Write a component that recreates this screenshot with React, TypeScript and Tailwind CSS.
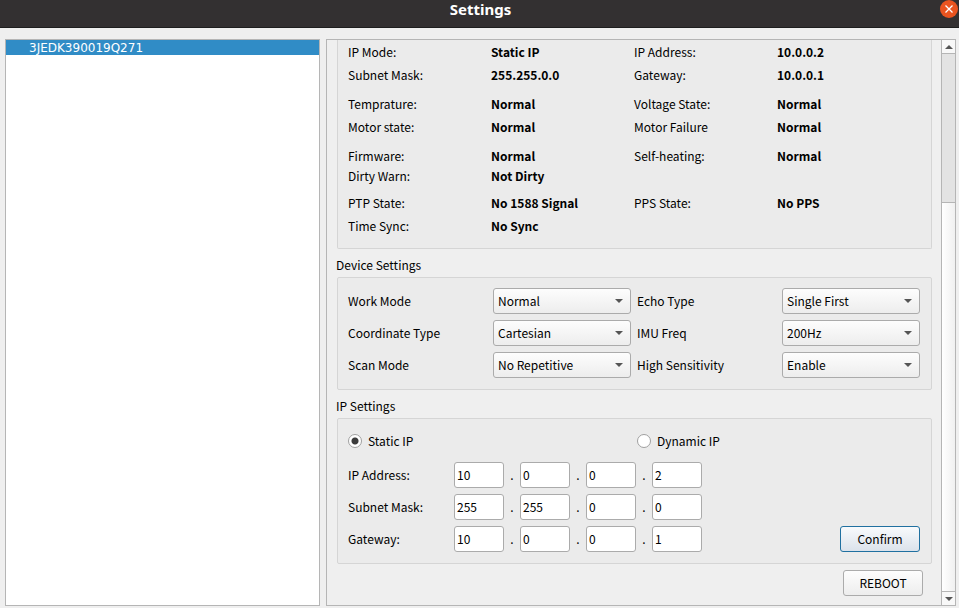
import type { ReactNode } from 'react';

const statusGroups = [
  {
    id: 'network',
    items: [
      ['IP Mode:', 'Static IP'],
      ['IP Address:', '10.0.0.2'],
      ['Subnet Mask:', '255.255.0.0'],
      ['Gateway:', '10.0.0.1'],
    ],
  },
  {
    id: 'health',
    items: [
      ['Temprature:', 'Normal'],
      ['Voltage State:', 'Normal'],
      ['Motor state:', 'Normal'],
      ['Motor Failure', 'Normal'],
    ],
  },
  {
    id: 'firmware',
    items: [
      ['Firmware:', 'Normal'],
      ['Self-heating:', 'Normal'],
      ['Dirty Warn:', 'Not Dirty'],
    ],
  },
  {
    id: 'sync',
    items: [
      ['PTP State:', 'No 1588 Signal'],
      ['PPS State:', 'No PPS'],
      ['Time Sync:', 'No Sync'],
    ],
  },
];

const deviceSettings = [
  { id: 'work-mode', label: 'Work Mode', options: ['Normal', 'Standby'] },
  { id: 'echo-type', label: 'Echo Type', options: ['Single First', 'Single Strongest', 'Dual'] },
  { id: 'coordinate', label: 'Coordinate Type', options: ['Cartesian', 'Spherical'] },
  { id: 'imu-freq', label: 'IMU Freq', options: ['200Hz', '0Hz'] },
  { id: 'scan-mode', label: 'Scan Mode', options: ['No Repetitive', 'Repetitive'] },
  { id: 'sensitivity', label: 'High Sensitivity', options: ['Enable', 'Disable'] },
];

const addressRows = [
  { id: 'ip', label: 'IP Address:', octets: ['10', '0', '0', '2'] },
  { id: 'mask', label: 'Subnet Mask:', octets: ['255', '255', '0', '0'] },
  { id: 'gateway', label: 'Gateway:', octets: ['10', '0', '0', '1'] },
];

function Arrow({ up = false }: { up?: boolean }) {
  return (
    <svg width="8" height="4" viewBox="0 0 8 4" fill="#555555" aria-hidden="true">
      <path d={up ? 'M0 4h8L4 0z' : 'M0 0h8L4 4z'} />
    </svg>
  );
}

function Heading({ children }: { children: ReactNode }) {
  return <h2 className="mt-1.5 mb-0.5 ml-[9px] leading-5">{children}</h2>;
}

function SelectField({ id, label, options }: { id: string; label: string; options: string[] }) {
  return (
    <>
      <label htmlFor={id}>{label}</label>
      <div className="relative">
        <select
          id={id}
          className="block h-[26px] w-full appearance-none rounded-[3px] border border-[#ababab] bg-linear-to-b from-[#fdfdfd] to-[#ededed] pl-1 pr-5"
        >
          {options.map((o) => (
            <option key={o}>{o}</option>
          ))}
        </select>
        <span className="pointer-events-none absolute inset-y-0 right-2 flex items-center">
          <Arrow />
        </span>
      </div>
    </>
  );
}

function Radio({ label, checked = false }: { label: string; checked?: boolean }) {
  return (
    <label className="flex items-center gap-1.5 leading-5">
      <input
        type="radio"
        name="ip-mode"
        defaultChecked={checked}
        className="size-3.5 appearance-none rounded-full border border-[#a0a0a0] bg-white checked:bg-[radial-gradient(circle,#3c3c3c_3px,#ffffff_4px)]"
      />
      {label}
    </label>
  );
}

export default function App() {
  return (
    <div className="flex h-screen flex-col bg-[#efefef] font-['Noto_Sans_CJK_SC','Noto_Sans',sans-serif] text-xs text-black">
      <header className="grid h-7 grid-cols-[1fr_auto_1fr] items-start border-b border-[#1e1e1e] bg-[#333031] text-white">
        <h1 className="col-start-2 pl-0.5 font-['Noto_Sans',sans-serif] text-[15px] leading-[18px] font-bold">Settings</h1>
        <button
          aria-label="Close"
          className="mr-px flex size-[18px] items-center justify-center justify-self-end rounded-full bg-[#e95420]"
        >
          <svg width="8" height="8" viewBox="0 0 8 8" stroke="#ffffff" strokeWidth="1.3" aria-hidden="true">
            <path d="M.5 .5l7 7M7.5 .5l-7 7" />
          </svg>
        </button>
      </header>

      <main className="grid min-h-0 flex-1 grid-cols-[1fr_2fr] gap-1.5 pt-[11px] pr-[3px] pb-0.5 pl-[5px]">
        <ul className="border border-[#b5b5b5] bg-white font-['DejaVu_Sans',sans-serif] text-xs">
          <li className="bg-[#308cc6] pt-0.5 pl-[23px] leading-[13px] text-white">3JEDK390019Q271</li>
        </ul>

        <div className="flex min-h-0 min-w-0 border border-[#b5b5b5]">
          <div className="min-w-0 flex-1 overflow-hidden pr-[9px]">
            <section className="ml-2.5 rounded-b-[2px] border border-t-0 border-[#d5d5d5] bg-[#ebebeb] pt-0.5 pr-[11px] pb-3 pl-2.5">
              {statusGroups.map((g) => (
                <dl
                  key={g.id}
                  className="mb-[9px] grid grid-cols-2 gap-y-[3px] nth-3:mb-[7px] nth-3:gap-y-0 last:mb-0"
                >
                  {g.items.map(([name, value]) => (
                    <div key={name} className="grid grid-cols-2 leading-5">
                      <dt>{name}</dt>
                      <dd className="font-bold">{value}</dd>
                    </div>
                  ))}
                </dl>
              ))}
            </section>

            <Heading>Device Settings</Heading>
            <section className="ml-2.5 grid grid-cols-[1fr_138px_1fr_138px] items-center gap-1.5 rounded-[2px] border border-[#d5d5d5] bg-[#ebebeb] pt-2.5 pr-[11px] pb-[11px] pl-2.5">
              {deviceSettings.map((s) => (
                <SelectField key={s.id} {...s} />
              ))}
            </section>

            <Heading>IP Settings</Heading>
            <section className="ml-2.5 rounded-[2px] border border-[#d5d5d5] bg-[#ebebeb] pt-3 pr-[11px] pb-[11px] pl-2.5">
              <div className="grid grid-cols-2 gap-1.5">
                <Radio label="Static IP" checked />
                <Radio label="Dynamic IP" />
              </div>
              <div className="mt-[11px] flex items-end justify-between">
                <div className="flex flex-col gap-1.5">
                  {addressRows.map((row) => (
                    <div key={row.id} className="flex items-center">
                      <label htmlFor={`${row.id}-0`} className="w-[106px]">
                        {row.label}
                      </label>
                      {row.octets.map((value, i) => (
                        <div key={i} className="flex items-center">
                          {i > 0 && <span className="w-4 text-center">.</span>}
                          <input
                            id={`${row.id}-${i}`}
                            type="text"
                            defaultValue={value}
                            aria-label={i > 0 ? `${row.label} ${i + 1}` : undefined}
                            className="h-[26px] w-[50px] rounded-[3px] border border-[#ababab] bg-white px-0.5 pb-0.5"
                          />
                        </div>
                      ))}
                    </div>
                  ))}
                </div>
                <button className="h-[26px] w-20 rounded-[3px] border border-[#2070a0] bg-linear-to-b from-[#f8fafc] to-[#dbe2eb]">
                  Confirm
                </button>
              </div>
            </section>

            <div className="mt-1.5 flex justify-end pr-[9px]">
              <button className="h-[26px] w-20 rounded-[3px] border border-[#ababab] bg-linear-to-b from-[#fdfdfd] to-[#ededed]">
                REBOOT
              </button>
            </div>
          </div>

          <div className="flex w-3.5 flex-col border-l border-[#b5b5b5]">
            <button
              aria-label="Scroll up"
              className="flex h-3.5 items-center justify-center border-b border-[#b5b5b5] bg-[#f8f8f8]"
            >
              <Arrow up />
            </button>
            <div className="h-[148px] bg-[#e3e3e3]" />
            <div className="flex-1 border-y border-[#b5b5b5] bg-linear-to-r from-white to-[#f0f0f0]" />
            <button aria-label="Scroll down" className="flex h-[13px] items-center justify-center bg-[#f8f8f8]">
              <Arrow />
            </button>
          </div>
        </div>
      </main>
    </div>
  );
}
